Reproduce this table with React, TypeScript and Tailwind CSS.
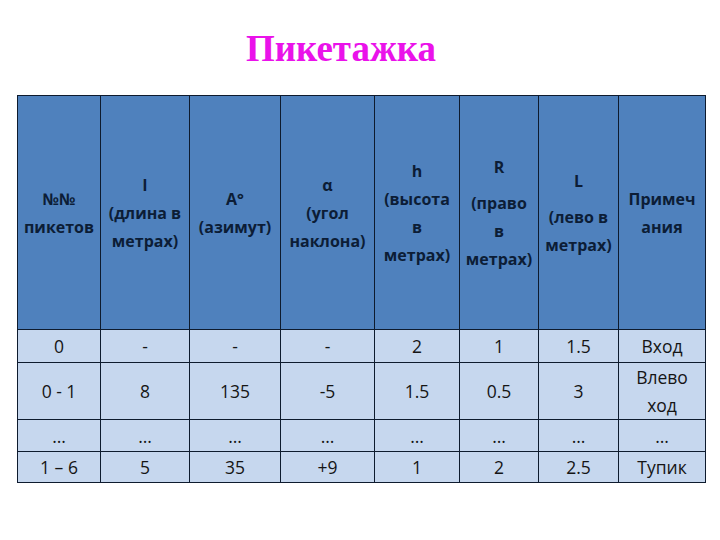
const cols = [83, 89, 91, 94, 85, 79, 80, 87]

const header: { lines: string[]; gap?: boolean }[] = [
  { lines: ["№№", "пикетов"] },
  { lines: ["l", "(длина в", "метрах)"] },
  { lines: ["А°", "(азимут)"] },
  { lines: ["α", "(угол", "наклона)"] },
  { lines: ["h", "(высота", "в", "метрах)"] },
  { lines: ["R", "(право", "в", "метрах)"], gap: true },
  { lines: ["L", "(лево в", "метрах)"], gap: true },
  { lines: ["Примеч", "ания"] },
]

const rows: { cells: string[]; h: number }[] = [
  { cells: ["0", "-", "-", "-", "2", "1", "1.5", "Вход"], h: 33 },
  { cells: ["0 - 1", "8", "135", "-5", "1.5", "0.5", "3", "Влево\nход"], h: 55 },
  { cells: ["…", "…", "…", "…", "…", "…", "…", "…"], h: 32 },
  { cells: ["1 – 6", "5", "35", "+9", "1", "2", "2.5", "Тупик"], h: 31 },
]

export default function App() {
  return (
    <div className="w-[720px] h-[540px] bg-white overflow-hidden">
      <div className="h-[95px] flex justify-center pr-[38px] pt-[29px]">
        <h1
          className="text-[37px] leading-[40px] font-bold text-[#ea12ea]"
          style={{ fontFamily: '"Liberation Serif", "DejaVu Serif", serif' }}
        >
          Пикетажка
        </h1>
      </div>
      <table
        className="ml-[17px] table-fixed border-collapse w-[688px]"
        style={{ fontFamily: '"Open Sans", "Noto Sans", sans-serif' }}
      >
        <colgroup>
          {cols.map((w, i) => (
            <col key={i} style={{ width: w }} />
          ))}
        </colgroup>
        <thead>
          <tr className="h-[234px] bg-[#4f81bd]">
            {header.map((c, i) => (
              <th
                key={i}
                className="border-[1.5px] border-[#0e1b2e] p-0 align-middle text-center text-[16px] font-bold leading-[28px] text-[#0c1d36]"
              >
                {c.lines.map((l, j) => (
                  <div key={j} className={c.gap && j === 0 ? "mb-[8px]" : ""}>
                    {l}
                  </div>
                ))}
              </th>
            ))}
          </tr>
        </thead>
        <tbody>
          {rows.map((r, i) => (
            <tr key={i} className="bg-[#c6d7ee]" style={{ height: r.h }}>
              {r.cells.map((c, j) => (
                <td
                  key={j}
                  className="border-[1.5px] border-[#0e1b2e] p-0 align-middle text-center text-[17.5px] leading-[28px] text-[#151515] whitespace-pre-line"
                >
                  {c}
                </td>
              ))}
            </tr>
          ))}
        </tbody>
      </table>
    </div>
  )
}
